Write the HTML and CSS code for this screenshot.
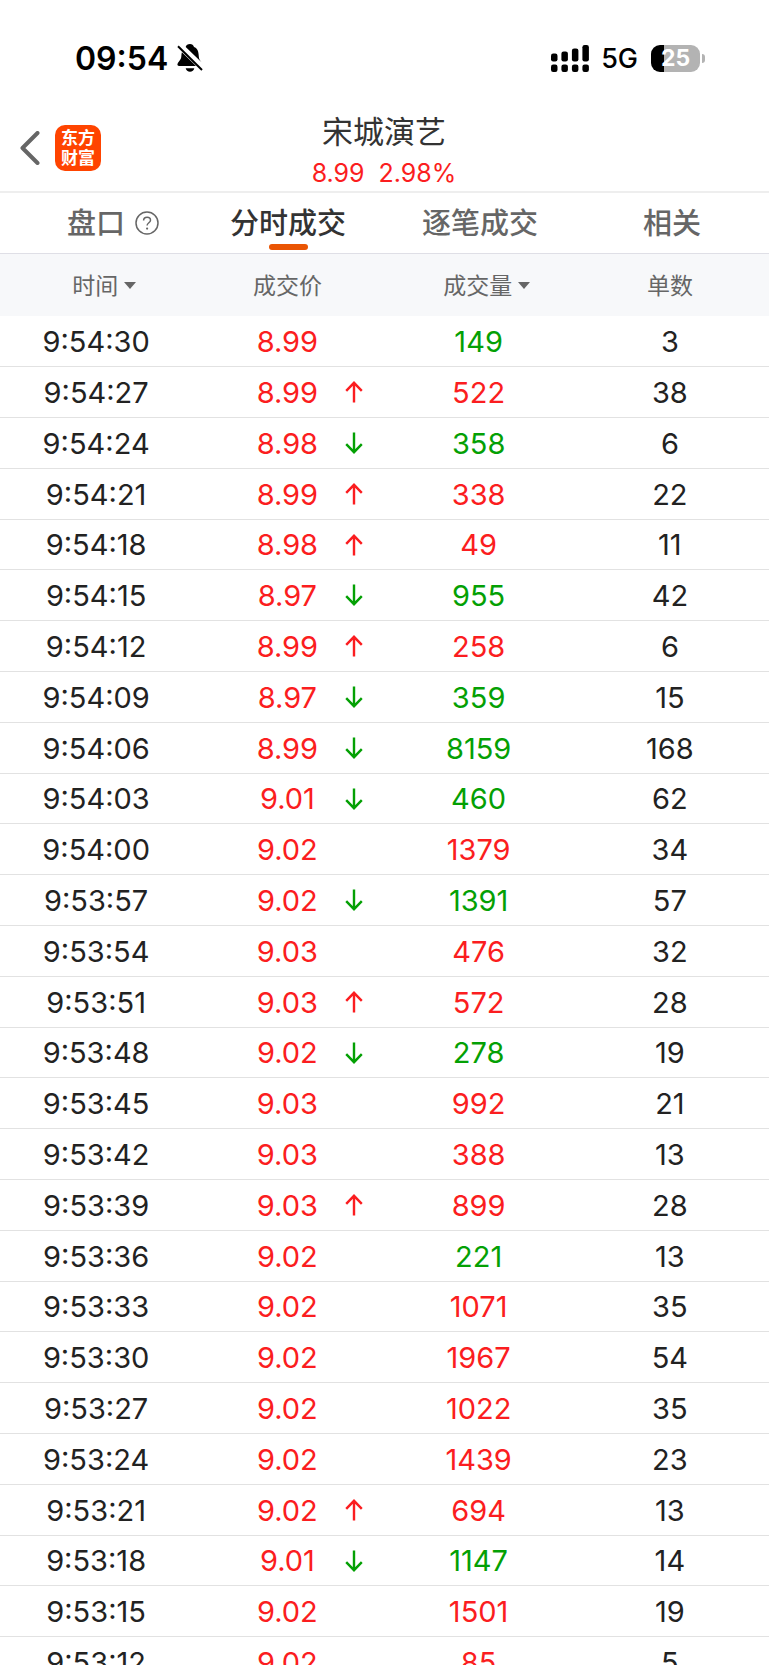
FILE: index.html
```html
<!DOCTYPE html>
<html lang="zh-CN">
<head>
<meta charset="utf-8">
<meta name="viewport" content="width=device-width, initial-scale=1">
<title>宋城演艺</title>
<link rel="stylesheet" href="styles.css">
</head>
<body>
<svg class="sprite" aria-hidden="true">
  <symbol id="up" viewBox="0 0 18 22"><path stroke-width="2.400" d="M9 21.500V1.500M1.200 9.800L9 1.800l7.800 8"/></symbol>
  <symbol id="down" viewBox="0 0 18 22"><path stroke-width="2.400" d="M9 .500v20M1.200 12.200L9 20.200l7.800-8"/></symbol>
</svg>
<div class="app">
  <div class="status">
    <div class="status-left">
      <span class="clock">09:54</span>
      <svg class="bell" viewBox="0 0 26 28" aria-hidden="true">
        <path d="M13 0c-2.200 0-4 1.300-4.300 3L24.500 18.300C23 16.500 22 15.500 21.800 12.500 21.600 7 20.500 4.300 17 3 16.500 1.200 15 0 13 0z"/>
        <path d="M4.900 8.200C4.300 10 4.500 12.500 4 14.300 3.400 16.500.4 18.500.4 20.600c0 .9.600 1.400 1.600 1.400h17z"/>
        <path d="M8.700 24.200h8.600c-.4 2.200-2.200 3.600-4.300 3.600s-3.900-1.400-4.300-3.600z"/>
        <path class="bell-slash" d="M1 2.200L25 26"/>
      </svg>
    </div>
    <div class="status-right">
      <svg class="signal" viewBox="0 0 38 27" aria-hidden="true">
        <rect x="0" y="8.500" width="6.500" height="8" rx="2.200"/>
        <rect x="10.400" y="6.500" width="6.500" height="10" rx="2.200"/>
        <rect x="20.900" y="3.500" width="6.500" height="13" rx="2.200"/>
        <rect x="31.400" y="0" width="6.500" height="16.500" rx="2.200"/>
        <rect x="0" y="19.500" width="6.500" height="7.500" rx="2.200"/>
        <rect x="10.400" y="19.500" width="6.500" height="7.500" rx="2.200"/>
        <rect x="20.900" y="19.500" width="6.500" height="7.500" rx="2.200"/>
        <rect x="31.400" y="19.500" width="6.500" height="7.500" rx="2.200"/>
      </svg>
      <span class="network">5G</span>
      <div class="battery"><span class="battery-body">25</span><span class="battery-cap"></span></div>
    </div>
  </div>

  <header class="header">
    <div class="header-left">
      <button class="back" type="button" aria-label="返回">
        <svg viewBox="0 0 20 34" aria-hidden="true"><path d="M17.500 2L2.500 17l15 15"/></svg>
      </button>
      <a class="logo" href="#"><span>东方</span><span>财富</span></a>
    </div>
    <div class="stock">
      <h1 class="stock-name">宋城演艺</h1>
      <div class="quote"><span>8.99</span><span>2.98%</span></div>
    </div>
  </header>

  <nav class="tabs">
    <button class="tab tab-with-help" type="button">盘口
      <svg class="help" viewBox="0 0 24 24" aria-hidden="true">
        <circle cx="12" cy="12" r="11"/>
        <path d="M8.600 9.600c0-2 1.500-3.300 3.500-3.300s3.400 1.200 3.400 3c0 2.400-3.400 2.600-3.400 5.200"/>
        <circle class="help-dot" cx="12.100" cy="17.600" r="1.100"/>
      </svg>
    </button>
    <button class="tab tab-active" type="button">分时成交</button>
    <button class="tab" type="button">逐笔成交</button>
    <button class="tab" type="button">相关</button>
  </nav>

  <table class="trades">
    <thead>
      <tr>
        <th scope="col"><button class="sort" type="button">时间<svg viewBox="0 0 12 7" aria-hidden="true"><path d="M0 0h12L6 7z"/></svg></button></th>
        <th scope="col">成交价</th>
        <th scope="col"><button class="sort" type="button">成交量<svg viewBox="0 0 12 7" aria-hidden="true"><path d="M0 0h12L6 7z"/></svg></button></th>
        <th scope="col">单数</th>
      </tr>
    </thead>
    <tbody>
      <tr><td>9:54:30</td><td class="price">8.99</td><td class="sell">149</td><td>3</td></tr>
      <tr><td>9:54:27</td><td class="price">8.99<svg class="arrow buy"><use href="#up"/></svg></td><td class="buy">522</td><td>38</td></tr>
      <tr><td>9:54:24</td><td class="price">8.98<svg class="arrow sell"><use href="#down"/></svg></td><td class="sell">358</td><td>6</td></tr>
      <tr><td>9:54:21</td><td class="price">8.99<svg class="arrow buy"><use href="#up"/></svg></td><td class="buy">338</td><td>22</td></tr>
      <tr><td>9:54:18</td><td class="price">8.98<svg class="arrow buy"><use href="#up"/></svg></td><td class="buy">49</td><td>11</td></tr>
      <tr><td>9:54:15</td><td class="price">8.97<svg class="arrow sell"><use href="#down"/></svg></td><td class="sell">955</td><td>42</td></tr>
      <tr><td>9:54:12</td><td class="price">8.99<svg class="arrow buy"><use href="#up"/></svg></td><td class="buy">258</td><td>6</td></tr>
      <tr><td>9:54:09</td><td class="price">8.97<svg class="arrow sell"><use href="#down"/></svg></td><td class="sell">359</td><td>15</td></tr>
      <tr><td>9:54:06</td><td class="price">8.99<svg class="arrow sell"><use href="#down"/></svg></td><td class="sell">8159</td><td>168</td></tr>
      <tr><td>9:54:03</td><td class="price">9.01<svg class="arrow sell"><use href="#down"/></svg></td><td class="sell">460</td><td>62</td></tr>
      <tr><td>9:54:00</td><td class="price">9.02</td><td class="buy">1379</td><td>34</td></tr>
      <tr><td>9:53:57</td><td class="price">9.02<svg class="arrow sell"><use href="#down"/></svg></td><td class="sell">1391</td><td>57</td></tr>
      <tr><td>9:53:54</td><td class="price">9.03</td><td class="buy">476</td><td>32</td></tr>
      <tr><td>9:53:51</td><td class="price">9.03<svg class="arrow buy"><use href="#up"/></svg></td><td class="buy">572</td><td>28</td></tr>
      <tr><td>9:53:48</td><td class="price">9.02<svg class="arrow sell"><use href="#down"/></svg></td><td class="sell">278</td><td>19</td></tr>
      <tr><td>9:53:45</td><td class="price">9.03</td><td class="buy">992</td><td>21</td></tr>
      <tr><td>9:53:42</td><td class="price">9.03</td><td class="buy">388</td><td>13</td></tr>
      <tr><td>9:53:39</td><td class="price">9.03<svg class="arrow buy"><use href="#up"/></svg></td><td class="buy">899</td><td>28</td></tr>
      <tr><td>9:53:36</td><td class="price">9.02</td><td class="sell">221</td><td>13</td></tr>
      <tr><td>9:53:33</td><td class="price">9.02</td><td class="buy">1071</td><td>35</td></tr>
      <tr><td>9:53:30</td><td class="price">9.02</td><td class="buy">1967</td><td>54</td></tr>
      <tr><td>9:53:27</td><td class="price">9.02</td><td class="buy">1022</td><td>35</td></tr>
      <tr><td>9:53:24</td><td class="price">9.02</td><td class="buy">1439</td><td>23</td></tr>
      <tr><td>9:53:21</td><td class="price">9.02<svg class="arrow buy"><use href="#up"/></svg></td><td class="buy">694</td><td>13</td></tr>
      <tr><td>9:53:18</td><td class="price">9.01<svg class="arrow sell"><use href="#down"/></svg></td><td class="sell">1147</td><td>14</td></tr>
      <tr><td>9:53:15</td><td class="price">9.02</td><td class="buy">1501</td><td>19</td></tr>
      <tr><td>9:53:12</td><td class="price">9.02</td><td class="buy">85</td><td>5</td></tr>
    </tbody>
  </table>
</div>
</body>
</html>
```
FILE: styles.css
```css
* { box-sizing: border-box; }

body {
  margin: 0;
  background: #fff;
  color: #222;
  font-family: Inter, "Noto Sans CJK SC", sans-serif;
}

button {
  padding: 0;
  border: 0;
  background: none;
  color: inherit;
  font: inherit;
}

.sprite { display: none; }

.app {
  height: 100vh;
  overflow: hidden;
}

/* Status bar */
.status {
  display: flex;
  justify-content: space-between;
  align-items: center;
  height: 116px;
  padding: 0 64px 0 75px;
  color: #000;
}

.status-left,
.status-right {
  display: flex;
  align-items: center;
}

.status-left { gap: 9px; }

.clock {
  padding-top: 1px;
  font-size: 32px;
  font-weight: 600;
  line-height: 40px;
}

.bell {
  width: 26px;
  height: 28px;
}

.bell-slash {
  fill: none;
  stroke: #000;
  stroke-width: 2;
}

.signal {
  width: 38px;
  height: 27px;
  margin-right: 12px;
}

.network {
  margin-right: 13px;
  padding-top: 2px;
  font-size: 27px;
  font-weight: 500;
  line-height: 32px;
}

.battery {
  display: flex;
  align-items: center;
  gap: 2px;
}

.battery-body {
  width: 49px;
  border-radius: 9px;
  background: linear-gradient(to right, #000 26%, #b3b3b3 26%);
  color: #fff;
  font-size: 23px;
  font-weight: 700;
  line-height: 27px;
  text-align: center;
}

.battery-cap {
  width: 3px;
  height: 9px;
  border-radius: 0 4px 4px 0;
  background: #b3b3b3;
}

/* Title bar */
.header {
  display: grid;
  grid-template-columns: 1fr auto 1fr;
  height: 77px;
  padding-right: 1px;
  border-bottom: 2px solid #eee;
}

.header-left {
  display: flex;
  align-items: center;
  align-self: start;
  gap: 15px;
  padding: 9px 0 0 20px;
}

.back {
  width: 20px;
  height: 34px;
}

.back svg {
  display: block;
  fill: none;
  stroke: #666;
  stroke-width: 4;
  stroke-linecap: round;
  stroke-linejoin: round;
}

.logo {
  display: flex;
  flex-direction: column;
  justify-content: center;
  width: 46px;
  height: 46px;
  border-radius: 10px;
  background: #ff4400;
  color: #fff;
  font-size: 17px;
  font-weight: 700;
  line-height: 20px;
  text-align: center;
  text-decoration: none;
}

.stock { text-align: center; }

.stock-name {
  margin: 0;
  color: #333;
  font-size: 31px;
  font-weight: 400;
  line-height: 32px;
}

.quote {
  display: flex;
  justify-content: center;
  gap: 14px;
  color: #fb1d20;
  font-size: 25px;
  line-height: 50px;
}

/* Tabs */
.tabs {
  display: grid;
  grid-template-columns: repeat(4, 1fr);
  height: 61px;
  padding-right: 1px;
  border-bottom: 1px solid #dfdfe6;
}

.tab {
  position: relative;
  display: flex;
  justify-content: center;
  align-items: center;
  gap: 10px;
  padding-top: 2px;
  color: #666;
  font-size: 29px;
  font-weight: 500;
  line-height: 40px;
}

.tab-with-help { padding-left: 34px; }

.tab-active { color: #333; }

.tab-active::after {
  content: "";
  position: absolute;
  bottom: 3px;
  left: 50%;
  width: 39px;
  height: 6px;
  margin-left: -19px;
  border-radius: 3px;
  background: #ea5504;
}

.help {
  width: 24px;
  height: 24px;
  margin-bottom: 2px;
  fill: none;
  stroke: #666;
  stroke-width: 1.500;
}

.help-dot {
  fill: #666;
  stroke: none;
}

/* Trades */
.trades {
  width: 100%;
  table-layout: fixed;
  border-collapse: separate;
  border-spacing: 0;
  text-align: center;
}

th {
  height: 62px;
  padding: 0 0 3px;
  background: #f7f8fa;
  color: #666;
  font-size: 23px;
  font-weight: 400;
}

.sort {
  display: inline-flex;
  align-items: center;
  gap: 6px;
  padding-left: 16px;
}

.sort svg {
  width: 12px;
  height: 7px;
  margin-top: 3px;
  fill: #666;
}

td {
  height: 51px;
  padding: 1px 0 0;
  border-bottom: 1px solid #e2e2e2;
  font-size: 29px;
  line-height: 48px;
}

tr:nth-child(5n) td { height: 50px; }

tr > :nth-child(2) { padding-right: 2px; }
tr > :nth-child(3) { padding-right: 4px; }
tr > :nth-child(4) { padding-right: 6px; }

.price {
  position: relative;
  color: #fb1d20;
}

.buy { color: #fb1d20; }
.sell { color: #04a004; }

.arrow {
  position: absolute;
  top: 14px;
  right: 22px;
  width: 18px;
  height: 22px;
  fill: none;
  stroke: currentColor;
}
```
